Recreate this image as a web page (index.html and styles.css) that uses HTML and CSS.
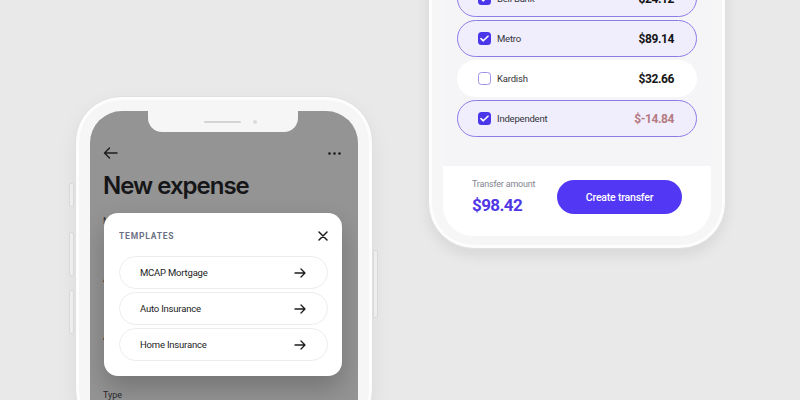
FILE: index.html
```html
<!DOCTYPE html>
<html lang="en">
<head>
    <meta charset="UTF-8">
    <meta name="viewport" content="width=device-width, initial-scale=1.0">
    <title>Expense templates</title>
    <link rel="stylesheet" href="styles.css">
</head>
<body>
    <div class="stage">
        <!-- left phone: new expense with templates sheet -->
        <div class="phone phone-left">
            <span class="side-btn side-mute"></span>
            <span class="side-btn side-up"></span>
            <span class="side-btn side-down"></span>
            <span class="side-btn side-power"></span>
            <div class="screen screen-dim">
                <div class="notch"><span class="speaker"></span><span class="camera"></span></div>
                <div class="topbar">
                    <svg width="15" height="12" viewBox="0 0 15 12" fill="none" stroke="#1c1c1e" stroke-width="1.4" stroke-linecap="round" stroke-linejoin="round"><path d="M14 6H1.5M6.5 1L1.5 6l5 5"/></svg>
                    <svg width="13" height="3" viewBox="0 0 13 3" fill="#1c1c1e"><circle cx="1.5" cy="1.5" r="1.3"/><circle cx="6.5" cy="1.5" r="1.3"/><circle cx="11.5" cy="1.5" r="1.3"/></svg>
                </div>
                <h1 class="title">New expense</h1>
                <div class="form">
                    <div class="field">Name</div>
                    <div class="field">Amount</div>
                    <div class="field">Account</div>
                    <div class="field">Type</div>
                </div>

                <div class="modal">
                    <div class="modal-head">
                        <span class="modal-title">Templates</span>
                        <svg width="10" height="10" viewBox="0 0 10 10" fill="none" stroke="#1c1c1e" stroke-width="1.5" stroke-linecap="round"><path d="M1 1l8 8M9 1L1 9"/></svg>
                    </div>
                    <div class="template-list">
                        <div class="template">
                            <span>MCAP Mortgage</span>
                            <svg width="12" height="10" viewBox="0 0 12 10" fill="none" stroke="#1c1c1e" stroke-width="1.3" stroke-linecap="round" stroke-linejoin="round"><path d="M1 5h10M7 1l4 4-4 4"/></svg>
                        </div>
                        <div class="template">
                            <span>Auto Insurance</span>
                            <svg width="12" height="10" viewBox="0 0 12 10" fill="none" stroke="#1c1c1e" stroke-width="1.3" stroke-linecap="round" stroke-linejoin="round"><path d="M1 5h10M7 1l4 4-4 4"/></svg>
                        </div>
                        <div class="template">
                            <span>Home Insurance</span>
                            <svg width="12" height="10" viewBox="0 0 12 10" fill="none" stroke="#1c1c1e" stroke-width="1.3" stroke-linecap="round" stroke-linejoin="round"><path d="M1 5h10M7 1l4 4-4 4"/></svg>
                        </div>
                    </div>
                </div>
            </div>
        </div>

        <!-- right phone: account selection and transfer -->
        <div class="phone phone-right">
            <div class="screen screen-light">
                <div class="accounts">
                    <div class="account selected">
                        <span class="check on"><svg width="9" height="7" viewBox="0 0 9 7" fill="none" stroke="#fff" stroke-width="1.6" stroke-linecap="round" stroke-linejoin="round"><path d="M1 3.6l2.3 2.2L8 1.2"/></svg></span>
                        <span class="account-name">Bell Bank</span>
                        <span class="amount">$24.12</span>
                    </div>
                    <div class="account selected">
                        <span class="check on"><svg width="9" height="7" viewBox="0 0 9 7" fill="none" stroke="#fff" stroke-width="1.6" stroke-linecap="round" stroke-linejoin="round"><path d="M1 3.6l2.3 2.2L8 1.2"/></svg></span>
                        <span class="account-name">Metro</span>
                        <span class="amount">$89.14</span>
                    </div>
                    <div class="account">
                        <span class="check"></span>
                        <span class="account-name">Kardish</span>
                        <span class="amount">$32.66</span>
                    </div>
                    <div class="account selected">
                        <span class="check on"><svg width="9" height="7" viewBox="0 0 9 7" fill="none" stroke="#fff" stroke-width="1.6" stroke-linecap="round" stroke-linejoin="round"><path d="M1 3.6l2.3 2.2L8 1.2"/></svg></span>
                        <span class="account-name">Independent</span>
                        <span class="amount negative">$-14.84</span>
                    </div>
                </div>
                <div class="transfer">
                    <div class="transfer-info">
                        <div class="transfer-label">Transfer amount</div>
                        <div class="transfer-total">$98.42</div>
                    </div>
                    <button class="transfer-btn">Create transfer</button>
                </div>
            </div>
        </div>
    </div>
</body>
</html>
```

FILE: styles.css
```css
body {
    margin: 0;
    background-color: #e9e9e9;
    font-family: Roboto, "Noto Sans", sans-serif;
    color: #1c1c1e;
}
.stage {
    display: flex;
    align-items: flex-start;
    height: 400px;
    overflow: hidden;
}

/* phone frames */
.phone {
    position: relative;
    flex: none;
    width: 298px;
    padding: 14px;
    box-sizing: border-box;
    background-color: #f6f6f7;
    border: 1px solid #e0e0e2;
    border-radius: 46px;
    box-shadow: inset 0 0 0 3px #fdfdfd, 0 8px 22px rgba(0, 0, 0, 0.06);
}
.phone-left {
    margin-top: 96px;
    margin-left: 75px;
    height: 340px;
}
.phone-right {
    margin-top: -74px;
    margin-left: 55px;
    height: 323px;
    box-shadow: inset 0 0 0 3px #fdfdfd, 0 6px 14px rgba(0, 0, 0, 0.08);
}
.side-btn {
    position: absolute;
    width: 3px;
    background-color: #eeeeef;
    border: 1px solid #d8d8da;
    border-radius: 2px;
}
.side-mute { left: -7px; top: 86px; height: 22px; }
.side-up { left: -7px; top: 135px; height: 42px; }
.side-down { left: -7px; top: 193px; height: 42px; }
.side-power { right: -6px; top: 153px; height: 66px; }

.screen {
    position: relative;
    overflow: hidden;
    border-radius: 32px;
    box-sizing: border-box;
}

/* left screen */
.screen-dim {
    height: 320px;
    background-color: #949494;
    padding: 35px 17px 0 13px;
}
.notch {
    position: absolute;
    top: 0;
    left: 58px;
    width: 150px;
    height: 21px;
    background-color: #f6f6f7;
    border-radius: 0 0 14px 14px;
    display: flex;
    justify-content: center;
    align-items: center;
    gap: 12px;
    padding-left: 14px;
    box-sizing: border-box;
}
.speaker {
    width: 37px;
    height: 2px;
    border-radius: 1px;
    background-color: #d4d4d6;
}
.camera {
    width: 4px;
    height: 4px;
    border-radius: 50%;
    background-color: #dcdcde;
}
.topbar {
    display: flex;
    justify-content: space-between;
    align-items: center;
    height: 14px;
}
.title {
    margin: 11px 0 0;
    font-family: Inter, sans-serif;
    font-size: 24px;
    font-weight: 600;
    line-height: 29px;
    letter-spacing: -1px;
    color: #161618;
}
.form {
    margin-top: 15px;
}
.field {
    height: 58px;
    font-size: 9px;
    line-height: 12px;
    color: #2b2b2d;
}

.modal {
    position: absolute;
    left: 14px;
    top: 102px;
    width: 238px;
    padding: 14px 14px 15px 15px;
    box-sizing: border-box;
    background-color: #fff;
    border-radius: 14px;
    box-shadow: 0 12px 26px rgba(0, 0, 0, 0.22);
}
.modal-head {
    display: flex;
    justify-content: space-between;
    align-items: center;
    height: 18px;
}
.modal-title {
    font-size: 8.5px;
    font-weight: 700;
    letter-spacing: 0.8px;
    text-transform: uppercase;
    color: #6b7184;
}
.template-list {
    display: flex;
    flex-direction: column;
    gap: 3px;
    margin-top: 11px;
}
.template {
    display: flex;
    justify-content: space-between;
    align-items: center;
    height: 33px;
    padding: 0 21px 0 20px;
    box-sizing: border-box;
    border: 1px solid #ececee;
    border-radius: 17px;
    font-size: 9.5px;
    letter-spacing: -0.2px;
    color: #222;
}

/* right screen */
.screen-light {
    display: flex;
    flex-direction: column;
    height: 295px;
    padding-top: 39px;
    border-radius: 30px;
    background-color: #f5f5f8;
}
.accounts {
    display: flex;
    flex-direction: column;
    gap: 3px;
    padding: 0 14px;
}
.account {
    display: flex;
    align-items: center;
    height: 37px;
    padding: 0 22px 0 20px;
    box-sizing: border-box;
    background-color: #fff;
    border: 1px solid transparent;
    border-radius: 19px;
}
.account.selected {
    background-color: #f0eefd;
    border-color: #8a7ee6;
}
.check {
    display: flex;
    justify-content: center;
    align-items: center;
    width: 13px;
    height: 13px;
    box-sizing: border-box;
    border: 1px solid #9e93e6;
    border-radius: 3.5px;
    background-color: #fff;
}
.check.on {
    border: none;
    background-color: #4c36ea;
}
.account-name {
    flex: 1;
    margin-left: 6px;
    font-size: 9.5px;
    letter-spacing: -0.2px;
    color: #333338;
}
.amount {
    font-size: 12px;
    font-weight: 700;
    letter-spacing: -0.4px;
    color: #141416;
}
.amount.negative {
    color: #b57a82;
}
.transfer {
    display: flex;
    justify-content: space-between;
    align-items: center;
    margin-top: auto;
    height: 70px;
    padding: 0 29px 8px;
    box-sizing: border-box;
    background-color: #fff;
}
.transfer-label {
    font-size: 9px;
    line-height: 11px;
    letter-spacing: -0.2px;
    color: #85858f;
}
.transfer-total {
    margin-top: 4px;
    font-size: 17px;
    font-weight: 700;
    line-height: 22px;
    letter-spacing: -0.6px;
    color: #5038e6;
}
.transfer-btn {
    width: 125px;
    height: 34px;
    border: none;
    border-radius: 17px;
    background-color: #5237f5;
    color: #fff;
    font-family: inherit;
    font-size: 10.5px;
    font-weight: 500;
    letter-spacing: -0.2px;
    cursor: pointer;
}
```
